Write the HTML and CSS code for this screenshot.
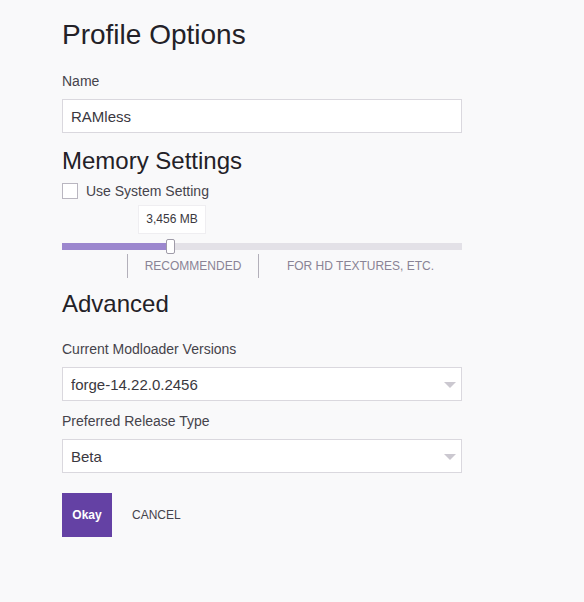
FILE: index.html
```html
<!DOCTYPE html>
<html lang="en">
<head>
<meta charset="utf-8">
<title>Profile Options</title>
<link rel="stylesheet" href="styles.css">
</head>
<body>
<main class="page">
  <h1 class="title">Profile Options</h1>

  <div class="field field-first">
    <label class="field-label" for="profile-name">Name</label>
    <input class="text-input" id="profile-name" type="text" value="RAMless">
  </div>

  <h2 class="section section-memory">Memory Settings</h2>

  <label class="check">
    <span class="check-box"></span>
    <span class="check-text">Use System Setting</span>
  </label>

  <div class="memory">
    <div class="bubble-row">
      <div class="bubble" style="left: 27.5%">3,456 MB</div>
    </div>
    <div class="slider">
      <div class="track">
        <div class="track-fill" style="width: 26%"></div>
      </div>
      <div class="thumb" style="left: 26%"></div>
    </div>
    <div class="marks">
      <span class="mark mark-low"></span>
      <span class="mark mark-mid">RECOMMENDED</span>
      <span class="mark mark-high">FOR HD TEXTURES, ETC.</span>
    </div>
  </div>

  <h2 class="section section-advanced">Advanced</h2>

  <div class="field field-first-adv">
    <label class="field-label" for="modloader">Current Modloader Versions</label>
    <div class="select-wrap">
      <select class="select" id="modloader">
        <option>forge-14.22.0.2456</option>
      </select>
      <svg class="select-arrow" width="12" height="6" viewBox="0 0 12 6"><path d="M0 0H12L6 6Z"/></svg>
    </div>
  </div>

  <div class="field field-next">
    <label class="field-label" for="release">Preferred Release Type</label>
    <div class="select-wrap">
      <select class="select" id="release">
        <option>Beta</option>
      </select>
      <svg class="select-arrow" width="12" height="6" viewBox="0 0 12 6"><path d="M0 0H12L6 6Z"/></svg>
    </div>
  </div>

  <div class="actions">
    <button class="btn-primary" type="button">Okay</button>
    <button class="btn-text" type="button">CANCEL</button>
  </div>
</main>
</body>
</html>
```

FILE: styles.css
```css
html, body {
  margin: 0;
  background: #f9f9fa;
}

body {
  font-family: "Liberation Sans", Arial, sans-serif;
  color: #232127;
}

.page {
  width: 400px;
  padding: 18px 0 0 62px;
}

.title {
  margin: 0;
  font-size: 28px;
  line-height: 34px;
  font-weight: normal;
  color: #232127;
}

.section {
  margin: 0;
  font-size: 24px;
  line-height: 28px;
  font-weight: normal;
  color: #232127;
}

.section-memory {
  margin-top: 14px;
}

.section-advanced {
  margin-top: 12px;
}

/* form fields */
.field-first {
  margin-top: 20px;
}

.field-first-adv {
  margin-top: 22px;
}

.field-next {
  margin-top: 11px;
}

.field-label {
  display: block;
  margin-bottom: 9px;
  font-size: 14px;
  line-height: 18px;
  color: #45434b;
}

.text-input,
.select {
  box-sizing: border-box;
  display: block;
  width: 400px;
  height: 34px;
  margin: 0;
  padding: 0 8px;
  border: 1px solid #dad8de;
  border-radius: 0;
  background: #fff;
  font-family: inherit;
  font-size: 15px;
  color: #3a3840;
  outline: none;
}

.select {
  appearance: none;
  -webkit-appearance: none;
}

.select-wrap {
  position: relative;
}

.select-arrow {
  position: absolute;
  right: 6px;
  top: 15px;
  fill: #cbc8d0;
  pointer-events: none;
}

/* checkbox */
.check {
  display: flex;
  align-items: center;
  gap: 8px;
  height: 16px;
  margin-top: 8px;
  font-size: 14px;
  color: #45434b;
}

.check-box {
  box-sizing: border-box;
  width: 16px;
  height: 16px;
  border: 1px solid #b9b6c0;
  background: #fff;
}

/* memory slider */
.memory {
  margin-top: 6px;
}

.bubble-row {
  position: relative;
  height: 29px;
}

.bubble {
  position: absolute;
  top: 0;
  box-sizing: border-box;
  width: 68px;
  height: 29px;
  transform: translateX(-50%);
  background: #fff;
  border: 1px solid #efeef1;
  font-size: 12px;
  line-height: 27px;
  text-align: center;
  color: #3a3840;
}

.slider {
  position: relative;
  display: flex;
  align-items: center;
  height: 15px;
  margin-top: 5px;
}

.track {
  flex: 1;
  height: 7px;
  background: #e3e1e7;
}

.track-fill {
  height: 100%;
  background: #9c87ce;
}

.thumb {
  position: absolute;
  top: 0;
  box-sizing: border-box;
  width: 9px;
  height: 15px;
  background: #fff;
  border: 1px solid #9f9ba8;
  border-radius: 2px;
}

.marks {
  display: flex;
  height: 24px;
  font-size: 12px;
  color: #898395;
}

.mark {
  display: flex;
  align-items: center;
  justify-content: center;
  box-sizing: border-box;
}

.mark-low {
  width: 65px;
}

.mark-mid {
  width: 131px;
  border-left: 1px solid #b3b0ba;
}

.mark-high {
  flex: 1;
  border-left: 1px solid #b3b0ba;
}

/* buttons */
.actions {
  display: flex;
  align-items: center;
  margin-top: 20px;
}

.btn-primary {
  width: 50px;
  height: 44px;
  padding: 0;
  border: none;
  background: #6441a4;
  color: #fff;
  font-family: inherit;
  font-size: 12px;
  font-weight: bold;
}

.btn-text {
  margin-left: 20px;
  padding: 0;
  border: none;
  background: none;
  color: #45434b;
  font-family: inherit;
  font-size: 12px;
}
```
